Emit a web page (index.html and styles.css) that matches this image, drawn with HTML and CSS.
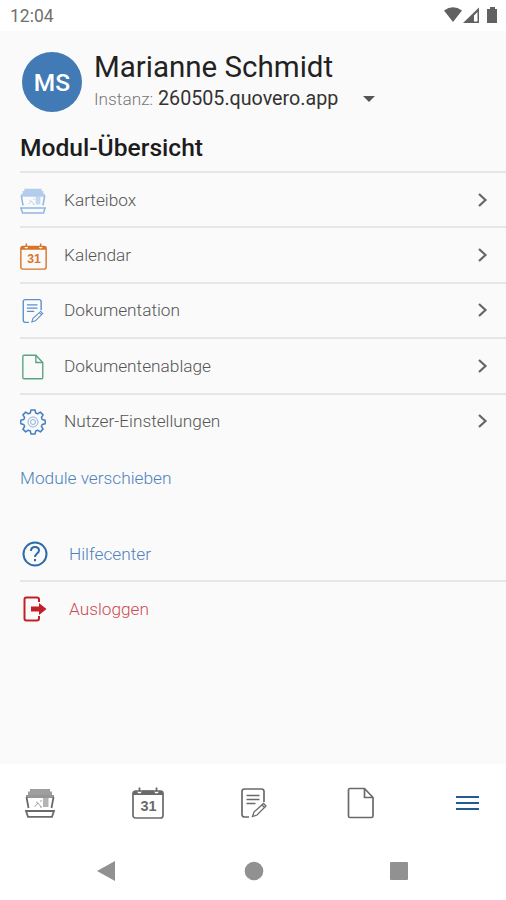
FILE: index.html
```html
<!DOCTYPE html>
<html lang="de">
<head>
	<meta charset="utf-8">
	<title>Modul-Übersicht</title>
	<link rel="stylesheet" href="styles.css">
</head>
<body>
	<!-- shared icons, coloured by currentColor -->
	<svg class="sprite" width="0" height="0">
		<symbol id="box" viewBox="0 0 30 30">
			<path d="M5 1h20v2.500h2V7H3V3.500h2z" fill="currentColor" opacity=".65"/>
			<path d="M1 7h28v3H1z" fill="currentColor" opacity=".7"/>
			<path d="M1.500 9L3.500 20M28.500 9l-2 11" fill="none" stroke="currentColor" stroke-width="1.800"/>
			<path d="M9.500 19l3.500-4-2-1M13 15l3 4M15 13h2M15 19h2" fill="none" stroke="currentColor" opacity=".6"/>
			<path d="M18 10h5.500v9H18z" fill="currentColor" opacity=".5"/>
			<path d="M1 23h28l-2 5.800H3z" fill="none" stroke="currentColor" stroke-width="1.800"/>
		</symbol>
		<symbol id="calendar" viewBox="0 0 32 32">
			<rect x="1" y="4" width="30" height="27" rx="2.500" fill="none" stroke="currentColor" stroke-width="1.700"/>
			<path d="M1 4h4q.5 2.500 2.500 2.500T10 3.500h12q.5 3 2.500 3T27 4h4v4H1z" fill="currentColor"/>
			<path d="M7.500 .5v4M24.500 .5v4" stroke="currentColor" stroke-width="1.800"/>
			<text x="16.500" y="23.500" text-anchor="middle" class="day">31</text>
		</symbol>
		<symbol id="note" viewBox="0 0 28 32">
			<path d="M9 30H4.500Q2 30 2 27.500V4.500Q2 2 4.500 2h17Q24 2 24 4.500V15" fill="none" stroke="currentColor" stroke-width="1.700"/>
			<path d="M6.500 8.500h13M6.500 12.500h13M6.500 16.500h9" stroke="currentColor" stroke-width="1.700"/>
			<path d="M12.500 29.500l1.500-4.500L23.500 16.500l2.500 2.500-9 9zM22 18l2.500 2.500" fill="none" stroke="currentColor" stroke-width="1.300"/>
		</symbol>
		<symbol id="file" viewBox="0 0 28 32">
			<path d="M3 1.500h14.500l8.500 9V29q0 1.500-1.500 1.500H3Q1.500 30.500 1.500 29V3Q1.500 1.500 3 1.500zM17.500 1.500v9H26" fill="none" stroke="currentColor" stroke-width="1.700"/>
		</symbol>
	</svg>

	<div class="statusbar">
		<span>12:04</span>
		<svg width="56" height="18" viewBox="0 0 56 18" fill="#616161">
			<path d="M0 4.500q9-6.500 18 0l-9 11.500z"/>
			<path d="M35 1.500V17H19zM33.500 6L30 9.500v6h3.500z" fill-rule="evenodd"/>
			<path d="M46 1h5v2h2v14H43V3h3z"/>
		</svg>
	</div>

	<main class="content">
		<header class="profile">
			<div class="avatar">MS</div>
			<div>
				<h1 class="name">Marianne Schmidt</h1>
				<div class="instance">
					<span class="label">Instanz:</span>
					<span class="host">260505.quovero.app</span>
					<span class="caret"></span>
				</div>
			</div>
		</header>

		<h2 class="title">Modul-Übersicht</h2>
		<ul class="modules">
			<li class="row">
				<svg class="icon light" width="26" height="26"><use href="#box"/></svg>
				<span class="text">Karteibox</span>
				<svg class="chevron" width="12" height="16" viewBox="0 0 12 16"><path d="M2 2l6.500 6L2 14"/></svg>
			</li>
			<li class="row">
				<svg class="icon orange" width="27" height="27"><use href="#calendar"/></svg>
				<span class="text">Kalendar</span>
				<svg class="chevron" width="12" height="16" viewBox="0 0 12 16"><path d="M2 2l6.500 6L2 14"/></svg>
			</li>
			<li class="row">
				<svg class="icon blue" width="24" height="26"><use href="#note"/></svg>
				<span class="text">Dokumentation</span>
				<svg class="chevron" width="12" height="16" viewBox="0 0 12 16"><path d="M2 2l6.500 6L2 14"/></svg>
			</li>
			<li class="row">
				<svg class="icon green" width="24" height="26"><use href="#file"/></svg>
				<span class="text">Dokumentenablage</span>
				<svg class="chevron" width="12" height="16" viewBox="0 0 12 16"><path d="M2 2l6.500 6L2 14"/></svg>
			</li>
			<li class="row">
				<svg class="icon steel" width="26" height="26" viewBox="0 0 26 26" fill="none" stroke="currentColor">
					<path stroke-width="1.500" stroke-linejoin="round" d="M11 1h4l.7 3 2 .8 2.600-1.700 2.800 2.800-1.700 2.600.8 2 3 .7v3.600l-3 .7-.8 2 1.700 2.600-2.800 2.800-2.600-1.700-2 .8-.7 3h-4l-.7-3-2-.8-2.600 1.700-2.800-2.800 1.700-2.600-.8-2-3-.7v-3.600l3-.7.8-2-1.700-2.600 2.800-2.800 2.600 1.700 2-.8z"/>
					<circle cx="13" cy="13" r="5" opacity=".6"/>
					<circle cx="13" cy="13" r="2.500" opacity=".6"/>
				</svg>
				<span class="text">Nutzer-Einstellungen</span>
				<svg class="chevron" width="12" height="16" viewBox="0 0 12 16"><path d="M2 2l6.500 6L2 14"/></svg>
			</li>
		</ul>
		<a class="move">Module verschieben</a>

		<ul class="actions">
			<li class="row help">
				<svg class="icon" width="26" height="26" viewBox="0 0 26 26" fill="none" stroke="#2c6caa" stroke-width="2">
					<circle cx="13" cy="13" r="11.500"/>
					<path d="M9 10q0-4 4-4t4 3.500c0 3-4 3-4 6.500M13 18v2.200"/>
				</svg>
				<span class="text">Hilfecenter</span>
			</li>
			<li class="row logout">
				<svg class="icon" width="26" height="26" viewBox="0 0 26 26" fill="none" stroke="#c22026" stroke-width="2">
					<path d="M17 6V3.500q0-2-2-2H4.500q-2 0-2 2v19q0 2 2 2H15q2 0 2-2V20"/>
					<path d="M9 10.500h8V7l7.500 6-7.500 6v-3.500H9z" fill="#c22026" stroke="none"/>
				</svg>
				<span class="text">Ausloggen</span>
			</li>
		</ul>
	</main>

	<nav class="tabs">
		<svg width="30" height="30"><use href="#box"/></svg>
		<svg width="32" height="32"><use href="#calendar"/></svg>
		<svg width="28" height="32"><use href="#note"/></svg>
		<svg width="28" height="32"><use href="#file"/></svg>
		<svg width="23" height="16" viewBox="0 0 23 16" stroke="#225b8f" stroke-width="2"><path d="M0 2h23M0 8h23M0 14h23"/></svg>
	</nav>
	<div class="system">
		<svg width="18" height="20" viewBox="0 0 18 20"><path d="M0 10L18 0v20z"/></svg>
		<svg width="20" height="20" viewBox="0 0 20 20"><circle cx="10" cy="10" r="9.300"/></svg>
		<svg width="20" height="20" viewBox="0 0 20 20"><rect x="1" y="1" width="18" height="18" rx="1"/></svg>
	</div>
</body>
</html>
```

FILE: styles.css
```css
* {
	box-sizing: border-box;
	margin: 0;
	padding: 0;
}
body {
	display: flex;
	flex-direction: column;
	height: 900px;
	overflow: hidden;
	font-family: Roboto, "Liberation Sans", sans-serif;
	background: #fff;
}
ul {
	list-style: none;
}
.sprite {
	display: none;
}
.statusbar {
	display: flex;
	justify-content: space-between;
	height: 31px;
	padding: 6px 6px 0 10px;
	font-size: 17.500px;
	line-height: 20px;
	color: #707070;
}
.content {
	height: 733px;
	padding: 18px 0 0 20px;
	background: #fafafa;
}
.profile {
	display: flex;
	gap: 12px;
	height: 78px;
	padding-left: 2px;
}
.avatar {
	width: 60px;
	height: 60px;
	margin-top: 3px;
	border-radius: 50%;
	font-size: 24.500px;
	font-weight: 500;
	line-height: 61px;
	text-align: center;
	color: #fff;
	background: #427ab5;
}
.name {
	font-size: 29.500px;
	font-weight: 400;
	line-height: 36px;
	color: #222;
}
.instance {
	display: flex;
	align-items: center;
	font-size: 17.300px;
	line-height: 28px;
}
.label {
	width: 64px;
	font-weight: 300;
	color: #777;
}
.host {
	font-size: 19.700px;
	color: #333;
}
.caret {
	margin-left: 25px;
	border: 6px solid transparent;
	border-top-color: #555;
	border-bottom: 0;
}
.title {
	height: 44px;
	font-size: 24.600px;
	font-weight: 500;
	line-height: 41px;
	color: #1c1c1c;
}
.row {
	display: flex;
	align-items: center;
	height: 55.400px;
	padding: 0 17px 0 0;
	border-top: 2px solid #e6e6e6;
}
.icon {
	flex: none;
}
.row .icon {
	margin-top: 2px;
}
.text {
	flex: 1;
	font-size: 17.250px;
	font-weight: 300;
	line-height: 24px;
	color: #555;
}
.modules .icon {
	width: 26px;
	margin-right: 18px;
}
.modules .orange {
	width: 27px;
	margin-right: 17px;
}
.chevron {
	fill: none;
	stroke: #666;
	stroke-width: 2.200;
}
.light {
	color: #8db7e5;
}
.orange {
	color: #d9752b;
}
.blue {
	color: #5b8fcd;
}
.green {
	color: #5aa580;
}
.steel {
	color: #4780bf;
}
.move {
	display: block;
	height: 77px;
	padding-top: 18px;
	font-size: 17.250px;
	font-weight: 300;
	line-height: 24px;
	color: #4f82bc;
}
.actions .row {
	padding-left: 2px;
}
.actions .row:first-child {
	border-top-color: transparent;
}
.actions .icon {
	margin-top: 0;
	margin-right: 21px;
}
.help .text {
	color: #4f82bc;
}
.logout .text {
	color: #cc4a55;
}
.day {
	font-family: "Liberation Sans", sans-serif;
	font-size: 14.500px;
	font-weight: bold;
	fill: currentColor;
}
.tabs {
	display: grid;
	grid-template-columns: 107px 108px 107px 109px 23px;
	align-items: center;
	height: 77px;
	padding: 0 0 0 25px;
	color: #6a6a6a;
}
.system {
	display: grid;
	grid-template-columns: 147px 145px 20px;
	align-items: center;
	height: 59px;
	padding: 0 97px;
	fill: #919191;
}
```
